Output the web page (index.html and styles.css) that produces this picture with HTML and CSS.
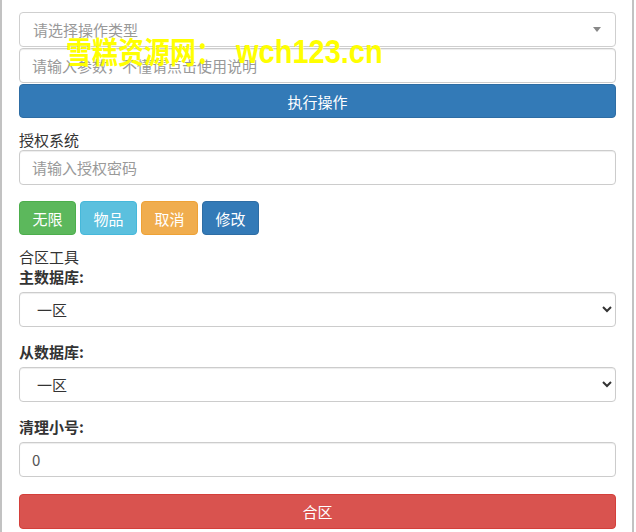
FILE: index.html
```html
<!DOCTYPE html>
<html lang="zh-CN">
<head>
<meta charset="utf-8">
<title>工具</title>
<link rel="stylesheet" href="styles.css">
</head>
<body>
<div class="page">
  <div class="fake-select">
    <span class="placeholder">请选择操作类型</span>
    <span class="caret"></span>
  </div>
  <input class="control tight" type="text" placeholder="请输入参数，不懂请点击使用说明">
  <button class="btn btn-primary btn-block tight">执行操作</button>

  <div class="label-plain gap-top">授权系统</div>
  <input class="control" type="text" placeholder="请输入授权密码">

  <div class="btn-row">
    <button class="btn btn-success">无限</button>
    <button class="btn btn-info">物品</button>
    <button class="btn btn-warning">取消</button>
    <button class="btn btn-primary">修改</button>
  </div>

  <div class="label-plain section-title">合区工具</div>
  <div class="form-group">
    <label class="label-bold">主数据库:</label>
    <select class="control select"><option>一区</option></select>
  </div>
  <div class="form-group">
    <label class="label-bold">从数据库:</label>
    <select class="control select"><option>一区</option></select>
  </div>
  <div class="form-group">
    <label class="label-bold">清理小号:</label>
    <input class="control" type="text" value="0">
  </div>
  <button class="btn btn-danger btn-block merge">合区</button>

  <div class="watermark"><span class="wm-cjk">雪糕资源网：</span><span class="wm-latin">wch123.cn</span></div>
</div>
</body>
</html>
```
FILE: styles.css
```css
* { box-sizing: border-box; }
html, body { margin: 0; padding: 0; background: #fff; }
body {
  font-family: "Noto Sans CJK SC", "Noto Sans", sans-serif;
  font-size: 15px;
  color: #333;
}
.page {
  position: relative;
  width: 634px;
  min-height: 532px;
  border-left: 2px solid #c2c2c2;
  border-right: 2px solid #c2c2c2;
  padding: 12px 16px 0 17px;
}
.fake-select {
  height: 35px;
  border: 1px solid #cfcfcf;
  border-radius: 4px;
  display: flex;
  align-items: center;
  justify-content: space-between;
  padding: 0 14px 0 13px;
  background: #fff;
}
.placeholder { color: #999; line-height: 20px; }
.caret {
  width: 0; height: 0;
  border-left: 4px solid transparent;
  border-right: 4px solid transparent;
  border-top: 5px solid #888;
}
.control {
  display: block;
  width: 100%;
  height: 35px;
  border: 1px solid #ccc;
  border-radius: 4px;
  padding: 0 12px;
  font-family: inherit;
  font-size: 15px;
  color: #555;
  background: #fff;
  box-shadow: inset 0 1px 1px rgba(0,0,0,.075);
  outline: none;
}
.control::placeholder { color: #999; }
.select { padding: 0 8px 0 13px; color: #333; }
.tight { margin-top: 1px; }
.btn {
  display: inline-flex;
  align-items: center;
  justify-content: center;
  height: 34px;
  padding: 0 12px;
  border: 1px solid transparent;
  border-radius: 4px;
  font-family: inherit;
  font-size: 15px;
  color: #fff;
  cursor: pointer;
}
.btn-block { display: flex; width: 100%; }
.btn-primary { background: #337ab7; border-color: #2e6da4; }
.btn-success { background: #5cb85c; border-color: #4cae4c; }
.btn-info { background: #5bc0de; border-color: #46b8da; }
.btn-warning { background: #f0ad4e; border-color: #eea236; }
.btn-danger { background: #d9534f; border-color: #d43f3a; }
.btn-row {
  display: flex;
  gap: 4px;
  margin-top: 16px;
}
.btn-row .btn { width: 57px; }
.label-plain { line-height: 20px; }
.gap-top { margin-top: 12px; }
.section-title { margin-top: 12px; }
.form-group { margin-bottom: 15px; }
.label-bold {
  display: block;
  font-weight: bold;
  line-height: 20px;
  margin-bottom: 5px;
}
.merge { margin-top: 17px; height: 35px; }
.watermark {
  position: absolute;
  left: 64px;
  top: 28px;
  color: #ffff00;
  font-weight: bold;
  white-space: nowrap;
  transform: scaleY(1.15);
  transform-origin: left top;
  pointer-events: none;
}
.wm-cjk {
  font-family: "Noto Sans CJK SC", sans-serif;
  font-size: 26px;
}
.wm-latin {
  font-family: "Liberation Sans", Arial, sans-serif;
  font-size: 29px;
  margin-left: 14px;
}
```
